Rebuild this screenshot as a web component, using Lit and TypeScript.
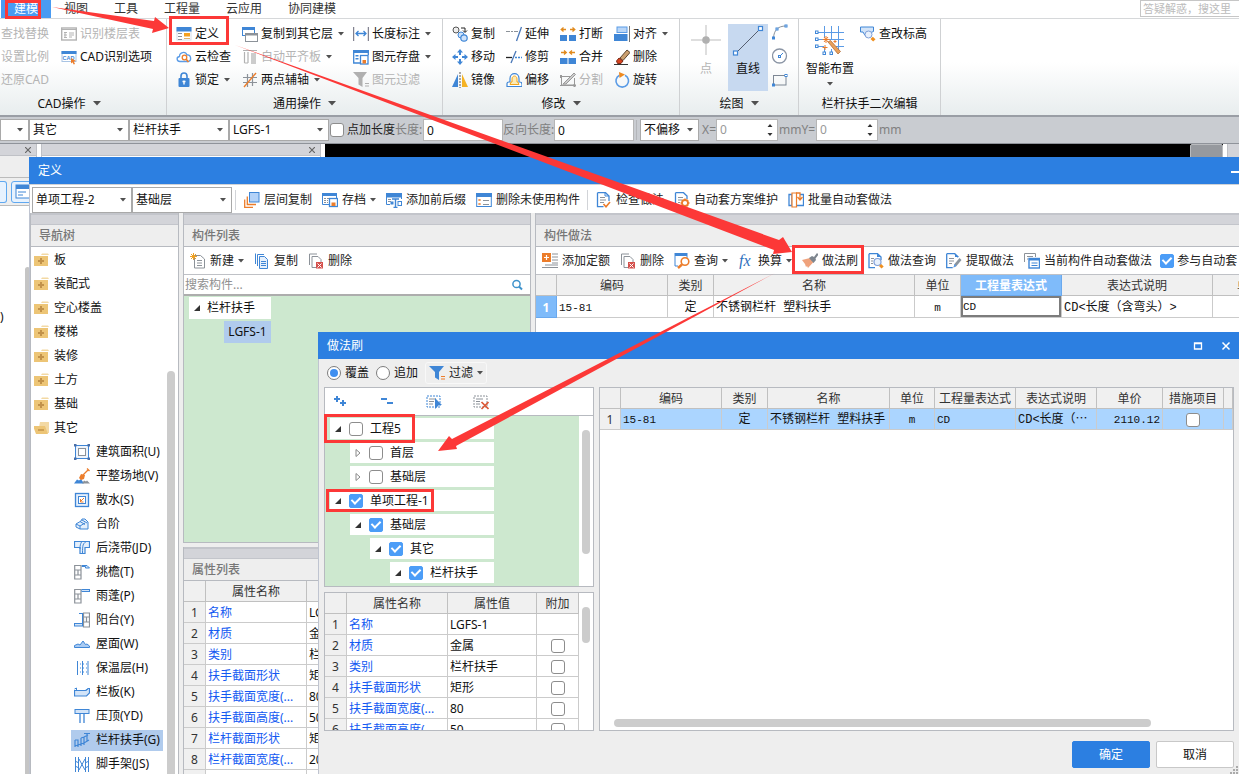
import { LitElement, html, svg, css, nothing } from "lit";
import type { SVGTemplateResult } from "lit";
import { customElement } from "lit/decorators.js";
import { classMap } from "lit/directives/class-map.js";
import { styleMap } from "lit/directives/style-map.js";

const B = "#3f86d6";
const L = "#5a9be6";
const P = "#d3e4f8";
const O = "#ec7d2b";
const G = "#8c9299";
const D = "#b2b2b2";

const folderBase = svg`<path d="M8 1.500h6l1 1.500H7z" fill="#f3d9a4"/><rect x="0" y="4" width="14" height="10" fill="#edc576"/>`;

const icons: Record<string, SVGTemplateResult> = {
  floorTable: svg`<rect x=".700" y="2" width="14.600" height="12" fill="none" stroke=${D} stroke-width="1.400"/><path d="M1 3.500h14M4 6v6M3 6.500h3M3 9h3M3 11.500h3M8 7h5M8 9h5M8 11h3" stroke=${D}/>`,
  cad: svg`<rect x="1" y="2.500" width="14" height="10" fill="#fff" stroke="#a9c4e4"/><path d="M.500 2h15v3H.500z" fill=${B}/><text x="1.500" y="11" font-size="5.500" font-family="Liberation Sans, sans-serif" font-weight="bold" fill=${B}>CAD</text><path d="M10 9l5 3-2.200.600L14 15l-1.300.600-1.200-2.300-1.500 1.200z" fill=${O}/>`,
  define: svg`<rect x="1" y="2" width="14" height="12" fill="#fff" stroke="#d4deea"/><path d="M.500 1h15v4.500H.500z" fill=${B}/><path d="M2 7.500h4M2 10.500h4M2 13.500h4" stroke=${G}/><rect x="8" y="7" width="6" height="3.500" fill="#f5a11f"/><path d="M8 12.500h6" stroke="#e0b26a"/>`,
  cloud: svg`<path d="M4 12.500C.500 12.500 0 8 3.500 7.500 3.500 3 9.500 2 11 6c4-.500 5 5.500 1.500 6.500z" fill="#fff" stroke=${L} stroke-width="1.300"/><circle cx="8.500" cy="8.500" r="2.300" fill="none" stroke=${O} stroke-width="1.300"/><path d="M10 10l2.500 3" stroke=${O} stroke-width="1.600"/>`,
  lock: svg`<path d="M5 7V4a3 3 0 0 1 6 0V7" fill="none" stroke=${B} stroke-width="1.600"/><rect x="2.500" y="6" width="11" height="9" rx="1" fill=${B}/><path d="M8 8.500v4M6.500 9.500h3" stroke="#fff" stroke-width="1.400"/>`,
  floors: svg`<rect x=".500" y="1.500" width="12" height="8" fill="#fff" stroke=${B}/><path d="M0 1h13v3H0z" fill=${B}/><rect x="3.500" y="7.500" width="12" height="8" fill="#fff" stroke=${G}/><path d="M3 7h13v2.500H3z" fill=${G}/>`,
  slab: svg`<path d="M1 1.500h14M2.500 3v11M6 3v11M2.500 14h3.500" stroke=${D} fill="none" stroke-width="1.200"/><path d="M9 4h5v11H9z" fill="#ccc"/>`,
  axis: svg`<path d="M1 5.500h14M1 10.500h14M5.500 2v13M10.500 1v13" stroke=${G} stroke-width="1.200"/><path d="M2 15L14 1" stroke=${O} stroke-width="1.400"/>`,
  dim: svg`<path d="M.700 1v14M15.300 1v14" stroke="#667" /><path d="M3 7.500h10M5.500 5L3 7.500 5.500 10M10.500 5L13 7.500 10.500 10" fill="none" stroke=${B} stroke-width="1.300"/>`,
  save: svg`<path d="M.700 2v12H7M15.300 2v4" fill="none" stroke=${B} stroke-width="1.300"/><path d="M0 1h16v3H0zM2.500 6h3v1.500h-3zM2.500 9h3v1.500h-3z" fill=${B}/><rect x="7.500" y="6.500" width="7.500" height="8.500" fill="#fff" stroke=${B} stroke-width="1.300"/><rect x="9.500" y="11" width="3.500" height="3.500" fill=${O}/>`,
  filterGrey: svg`<path d="M0 0h14L9.500 6v9L5.500 12.500V6z" fill="#b0b0b0"/><path d="M12 11.500h4M12 14h4" stroke="#b0b0b0"/>`,
  filter: svg`<path d="M0 1h15l-5 6v8L6 12.500V7z" fill=${B}/><path d="M12 11.500h4M12 14h4" stroke=${O}/>`,
  copyEl: svg`<circle cx="4" cy="4" r="3" fill="#eee" stroke="#555"/><circle cx="9" cy="9" r="3" fill="#cfe3fb" stroke=${B}/><circle cx="12" cy="12" r="3.200" fill="#cfe3fb" stroke=${B} stroke-width="1.200"/><path d="M9 2h4v4M11 4.500l2 2 2-2" fill="none" stroke="#222"/>`,
  move: svg`<path d="M8 0l3 3.500H9V6H7V3.500H5zM8 16l3-3.500H9V10H7v2.500H5zM0 8l3.500-3v2H6v2H3.500v2zM16 8l-3.500-3v2H10v2h2.500v2z" fill=${B}/>`,
  mirror: svg`<path d="M0 15L6 2v13z" fill=${B}/><path d="M16 15L10 2v13z" fill="#f5b324"/><path d="M8 0v16" stroke="#555" stroke-dasharray="2 1"/>`,
  extend: svg`<path d="M0 5.500h4M5 5.500h2M8 5.500h4" stroke=${G}/><path d="M15.500 1l-5 14" stroke="#4a78b8" stroke-width="1.300"/>`,
  trim: svg`<path d="M0 8.500h6" stroke="#222" stroke-width="1.300"/><path d="M9 8.500h2M12 8.500h2M15 8.500h1" stroke=${B} stroke-width="1.300"/><path d="M10 2L5 14" stroke="#4a78b8" stroke-width="1.300"/>`,
  offset: svg`<path d="M1 14.500v-3q0-1.500 2-1.500h1V6.500C4 0 13 0 13 6.500V10q3 0 3 2v2.500z" fill="#fff" stroke=${B} stroke-width="1.200"/><path d="M4 12.500h9l-1-2.500h-1V7c0-4-5-4-5 0v3H5z" fill="#fdebb5" stroke="#f0a61e"/>`,
  break: svg`<path d="M0 9h7v6H0zM9 9h7v6H9z" fill=${B}/><path d="M1 3.500h5M3.500 1.500L1.200 3.500l2.300 2M10 3.500h5M12.500 1.500l2.300 2-2.300 2" fill="none" stroke="#e08a1e" stroke-width="1.300"/>`,
  merge: svg`<path d="M0 9h7.500v6H0zM8.500 9H16v6H8.500z" fill=${B}/><path d="M1 3.500h5M4 1.500l2.300 2-2.300 2M10 3.500h5M12 1.500l-2.300 2 2.300 2" fill="none" stroke="#e08a1e" stroke-width="1.300"/>`,
  split: svg`<path d="M1 4.500h9M14.500 6v7h-13v-8M0 13.500h16" fill="none" stroke="#999"/><path d="M3 12L14 1l1.500 1.500L6 12z" fill="#ccc" stroke="#999"/><path d="M1 3v3M14.500 12v3" stroke="#999" stroke-width="2"/>`,
  align: svg`<rect x="3" y="1" width="10" height="5.500" fill="#b9d6f8" stroke=${L}/><rect x="0" y="8" width="13.500" height="7" fill=${B}/><path d="M15.500 0v16" stroke="#777"/>`,
  erase: svg`<path d="M0 15.500h14" stroke="#333"/><path d="M6 9l7-8 3 2.500-7 8z" fill="#cba070" stroke="#5b4630"/><path d="M5 9l4 3-2 2.500H3.500L2.500 12z" fill="#d8431f" stroke="#7d2a16"/>`,
  rotate: svg`<path d="M5.500 3.200a6.300 6.300 0 1 0 5.500 0" fill="none" stroke=${L} stroke-width="1.600"/><path d="M5 0l6 2.500L5.500 6z" fill="#ee8a20"/>`,
  point: svg`<path d="M16 1v12M16 19v12M1 16h12M19 16h12" stroke="#bdbdbd"/><circle cx="16" cy="16" r="3.800" fill="#b0b0b0"/>`,
  line: svg`<path d="M4 29L29 4" stroke="#555e70"/><rect x="1.500" y="27" width="4" height="4" fill="#fff" stroke=${B} stroke-width="1.200"/><rect x="26.500" y="2.500" width="4" height="4" fill="#fff" stroke=${B} stroke-width="1.200"/>`,
  arc: svg`<path d="M1.500 14C2 6 6 2 14 2" fill="none" stroke=${G}/><rect x=".500" y="13" width="2" height="2" fill="#fff" stroke=${B}/><rect x="4" y="4" width="2" height="2" fill="#fff" stroke=${B}/><rect x="13" y="1" width="2" height="2" fill="#fff" stroke=${B}/>`,
  circle: svg`<circle cx="7.500" cy="8" r="7" fill="none" stroke="#8b95a5" stroke-width="1.300"/><path d="M8 8l3-3" stroke=${B}/><rect x="6.500" y="7.500" width="2" height="2" fill="#fff" stroke=${B}/>`,
  rect: svg`<rect x="1.500" y="3.500" width="12.500" height="9.500" fill="none" stroke="#7d8794"/><rect x=".500" y="12" width="2" height="2" fill="#fff" stroke=${B}/><rect x="13" y="2.500" width="2" height="2" fill="#fff" stroke=${B}/>`,
  smart: svg`<path d="M2 8.500h28M4 15.500h26M4 22.500h6M22 22.500h8M10.500 2v12M10.500 24v5M17.500 2v14M17.500 25v4M24.500 2v24" stroke=${L} fill="none"/><g fill="#fff" stroke=${B}><rect x="1.500" y="7" width="2.500" height="2.500"/><rect x="1.500" y="14" width="2.500" height="2.500"/><rect x="1.500" y="21" width="2.500" height="2.500"/><rect x="9" y="28" width="2.500" height="2.500"/><rect x="16" y="28" width="2.500" height="2.500"/></g><path d="M14 18l2.500-1.500 10 11-2.500 2.500z" fill="#e9a15c" stroke="#a9622c" stroke-width=".700"/><path d="M12 12v7M8.500 15.500h7M10 13l4 5M14 13l-4 5M11 21v5M8.500 23.500h5M21 16v3M19.500 17.500h3" stroke=${O}/>`,
  elevation: svg`<path d="M.500 1h13v4.500l-2.500 1v3H5l-2-3.500H.500z" fill=${P} stroke=${B}/><circle cx="8.500" cy="8.500" r="3.500" fill="#e9f1fc" stroke="#7f9fd8"/><path d="M10.500 13l2.300-2.300 2.700 2.600-2.300 2.300z" fill="#f09020"/>`,
  between: svg`<rect x="5.500" y=".500" width="9.500" height="9.500" fill="#b3d2f8" stroke=${B}/><path d="M3.300 4.500V12.500H12M.700 7.500V15.300H9" fill="none" stroke=${O} stroke-width="1.300"/>`,
  archive: svg`<path d="M.500 2.500h14v4M.500 2.500v10H7" fill="none" stroke=${B}/><path d="M0 1h15v3H0z" fill=${B}/><path d="M2 6.500h5M2 8.500h4M2 10.500h4" stroke=${G} stroke-dasharray="2 1"/><rect x="7.500" y="6.500" width="8" height="8" fill="#fff" stroke=${B} stroke-width="1.300"/><rect x="9.500" y="10.500" width="4" height="3.500" fill=${O}/>`,
  prefix: svg`<path d="M.500 3.500v9H4M15.500 3v4" fill="none" stroke=${B}/><path d="M0 1h16v4.500H0z" fill=${B}/><path d="M2 7.500h3M2 9.500h3" stroke=${G}/><path d="M6 7h7M9.500 7v8.500M7.500 15.500h4" stroke=${B} stroke-width="1.400" fill="none"/><rect x="4.500" y="9.500" width="3" height="3" fill=${B}/><rect x="12" y="9.500" width="3.500" height="4" fill="#fff" stroke=${B}/>`,
  unused: svg`<rect x=".700" y="2" width="14.600" height="12.500" fill="#fff" stroke=${B}/><path d="M0 1h16v4H0z" fill=${B}/><path d="M2.500 7l2 2M4.500 7l-2 2M2.500 11l2 2M4.500 11l-2 2" stroke=${O}/><path d="M7 8.500h6M7 12.500h6" stroke=${G}/>`,
  check: svg`<path d="M1.500.700h8L13 4v5M1.500.700v14h6" fill="none" stroke=${B} stroke-width="1.300"/><path d="M9 .500V4h4" fill="none" stroke=${B}/><path d="M4 5.500h5M4 8h6M4 10.500h4" stroke=${G}/><path d="M7.500 12l2.500 2.800L14 10" fill="none" stroke=${O} stroke-width="1.600"/>`,
  scheme: svg`<path d="M1.500.700h8L13 4v3M1.500.700v14h5" fill="none" stroke=${B} stroke-width="1.300"/><path d="M4 5.500h5M4 8h4M4 10.500h2" stroke=${G}/><circle cx="11" cy="11" r="3" fill="#fff" stroke=${O} stroke-width="1.800"/><path d="M11 6.500v2M11 13.500v2M6.500 11h2M13.500 11h2M8 8l1 1M13 13l1 1M14 8l-1 1M9 13l-1 1" stroke=${O} stroke-width="1.600"/>`,
  batch: svg`<path d="M1 2.500h3v11H1zM12 2.500h3.500v11H7" fill="#fff" stroke=${B} stroke-width="1.300"/><path d="M4 1h4.500v14H4z" fill="#fff" stroke=${O} stroke-width="1.200"/><path d="M8 1h4v6M9.500 5l2.500 3 2.500-3" fill="none" stroke=${O} stroke-width="1.300"/>`,
  add: svg`<path d="M4.500 2.500h6L14.500 6v9h-10z" fill="#fff" stroke=${G}/><path d="M7 7.500h5M7 10h5M7 12.500h5" stroke=${G}/><path d="M3.500 0v7M0 3.500h7M1 1l5 5M6 1L1 6" stroke="#f0a020"/>`,
  copyDoc: svg`<path d="M5.500 3.500h5l3 3v9h-8z" fill="#e6f0fc" stroke=${B}/><path d="M3.500 13V1.500H10M1.500 11V.500" fill="none" stroke=${B}/><path d="M7 8.500h5M7 10.500h5M7 12.500h5" stroke=${B}/>`,
  delDoc: svg`<path d="M4 3.500h6l3 3V10M4 3.500v11h4" fill="none" stroke=${G}/><path d="M1.500 12V1H9" fill="none" stroke=${G}/><rect x="8" y="9" width="7" height="6.500" fill="#d4504c"/><path d="M9.500 10.500l4 4M13.500 10.500l-4 4" stroke="#fff"/>`,
  quota: svg`<rect x="0" y="0" width="9" height="9" fill=${O}/><path d="M4.500 2v5M2 4.500h5" stroke="#fff" stroke-width="1.200"/><path d="M10 1h6M10 4h6M10 7h6M10 10h6M3 12h13M0 14.500h16" stroke=${G}/>`,
  query: svg`<path d="M.500 0h13v3H.500z" fill=${B}/><path d="M1 3v10h3M13 3v2" stroke=${B} fill="none"/><circle cx="11" cy="8.500" r="3.800" fill="#fff" stroke=${O} stroke-width="1.600"/><path d="M8 11.500l-4 3.500" stroke=${O} stroke-width="2.400"/>`,
  fx: svg`<text x="1" y="13" font-size="16" font-style="italic" font-family="Liberation Serif, serif" fill="#2d6fc0">fx</text>`,
  brush: svg`<path d="M0 7l8-2 3.500 4-5.500 6-1-2-1 1-1-3z" fill="#efa27c"/><path d="M7 5l3-2 2 1 3-4 1.500 1.500-3 4L14 7l-2.500 3z" fill="#7d858e"/>`,
  methodQuery: svg`<path d="M1 .700h8.500L13 4v3M1 .700v14h6" fill="none" stroke=${B} stroke-width="1.300"/><path d="M9 .500V4h4z" fill=${B}/><path d="M3 5.500h3M3 8h2M3 10.500h2" stroke=${G}/><circle cx="9.500" cy="9" r="3.500" fill="#e9f1fc" stroke="#7f9fd8" stroke-width="1.200"/><path d="M11 13l2.200-2 2.500 2.500-2.200 2z" fill="#f09020"/>`,
  extract: svg`<path d="M.700.700h8l3.500 3.500M.700.700v14h6" fill="none" stroke=${B} stroke-width="1.300"/><path d="M9 .500V4h4z" fill=${B}/><path d="M3 5.500h5M3 8h5M3 10.500h3" stroke=${G}/><path d="M7.500 14.500l1-3.500 5-6 2 2-5 6z" fill="#8a949e"/><path d="M7.500 14.500l1-3.500 2 2z" fill=${L}/>`,
  current: svg`<path d="M.500 9V.500h11V4M3 3.500h6M3 6h1" fill="none" stroke=${G}/><rect x="5" y="5.500" width="10.500" height="9.500" fill="#fff" stroke=${B} stroke-width="1.400"/><path d="M5 5h11v2.500H5z" fill=${B}/><path d="M7.500 10h6M7.500 12.500h6" stroke=${B} stroke-width="1.200"/>`,
  search: svg`<circle cx="7.500" cy="7" r="3.600" fill="#fff" stroke="#3f93cc" stroke-width="1.500"/><path d="M10 9.500l3 3" stroke="#3f93cc" stroke-width="2"/>`,
  expandAll: svg`<path d="M5 2v6M2 5h6M11 6v6M8 9h6" stroke=${B} stroke-width="2"/>`,
  collapseAll: svg`<path d="M2 5h6M8 9h6" stroke=${B} stroke-width="2"/>`,
  selectAll: svg`<rect x="1" y="2" width="13" height="11" fill="none" stroke=${B} stroke-dasharray="2 1"/><path d="M3 5h7M3 7.500h5M3 10h4" stroke=${G}/><path d="M9 4l7 7h-3l-4 4z" fill=${B}/>`,
  selectNone: svg`<rect x="1" y="2" width="13" height="11" fill="none" stroke=${G} stroke-dasharray="2 1"/><path d="M3 5h7M3 7.500h4M3 10h4" stroke=${G}/><path d="M8.500 8l7 7M15.500 8l-7 7" stroke="#dc5a38" stroke-width="1.700"/>`,
  folder: svg`${folderBase}<path d="M7 6v6M4 9h6" stroke="#c2924a" stroke-width="2"/>`,
  folderOpen: svg`<path d="M6 2h9v11H4z" fill="#f3d9a4"/><path d="M-1 6h12l3 8H2z" fill="#edc576"/><path d="M4 10h6" stroke="#c2924a" stroke-width="1.500"/>`,
  area: svg`<rect x="1.500" y="1.500" width="13" height="13" fill="#eef4fc" stroke=${B}/><rect x="4.500" y="4.500" width="7" height="7" fill="#fff" stroke=${G}/><path d="M0 0h2.500v2.500H0zM13.500 0H16v2.500h-2.500zM0 13.500h2.500V16H0zM13.500 13.500H16V16h-2.500z" fill="#4a6fa8"/>`,
  ground: svg`<path d="M0 15.500l3-4 2 1 2-1.500 3 4.500z" fill=${B}/><path d="M8 15.500l2-3 2 1 1-1 3 3z" fill=${G}/><path d="M5 10l2-4 4 1-1 4-3 1z" fill=${O}/><path d="M9 7l5-5M13 .500l2.500 2.500" stroke=${O} stroke-width="1.300"/>`,
  apron: svg`<rect x="1.500" y="1.500" width="13" height="13" fill="#e4effc" stroke=${B} stroke-width="1.300"/><rect x="4.500" y="4.500" width="7" height="7" fill="#fff" stroke=${B}/><path d="M10 6L7 9M6.500 7v3h3" fill="none" stroke=${O}/>`,
  steps: svg`<path d="M2 8l5-3 1-2h3l3 3v7H6l-4-2zM2 8l4 2v3M6 10l5-3M6 5.500l5 3M8 4l5 3" fill="#e4effc" stroke=${B}/>`,
  strip: svg`<path d="M.500 1.500h15v6H11V13.500H6V7.500H.500z" fill="#e4effc" stroke=${B} stroke-width="1.200"/><path d="M7.500 2C6.500 4 6 5 6 9M12 1.500c-3 2.500-3.500 3-3.500 12" fill="none" stroke=${B}/>`,
  cornice: svg`<path d="M.700 1.500h6.300v13.500H.700zM.700 6h6.300M4 6v5M.700 11h6.300" fill="none" stroke=${G} stroke-width="1.200"/><path d="M8 1.500h5l2.500 2.500h-4V2.500H8z" fill=${P} stroke=${B}/>`,
  canopy: svg`<path d="M.700 1.500h6.300v13.500H.700zM.700 6h6.300M4 6v5M.700 11h6.300" fill="none" stroke=${G} stroke-width="1.200"/><rect x="8" y="1.500" width="7.500" height="2" fill=${P} stroke=${B}/>`,
  balcony: svg`<path d="M9.500 1v14h6V1zM9.500 5h6M12.500 5v5M9.500 10h6" fill="none" stroke=${G} stroke-width="1.200"/><path d="M5 1.500h4M8.500 2v9" stroke=${B}/><rect x=".500" y="11.500" width="8" height="2.500" fill=${P} stroke=${B}/>`,
  roof: svg`<path d="M.500 11.500v-2L4 8l2 1 3-4 2.500 3.500L13 8l2.500 2v1.500z" fill="#a9cbf3" stroke=${B}/>`,
  insulation: svg`<path d="M3.500 1v14M8.500 1v14M14 1v14" stroke=${B}/><path d="M3 4h11M3 8h11M3 12h11" stroke=${B} stroke-dasharray="1 2"/>`,
  railPanel: svg`<path d="M.500 6.500h11l3-2h1V9l-3 3h-12z" fill=${P} stroke=${B} stroke-width="1.200"/><path d="M.500 5l2-1v2M11.500 7l3-3" stroke=${B} fill="none"/>`,
  coping: svg`<rect x="1" y="1.500" width="14" height="4" fill=${P} stroke=${B}/><path d="M6 6v9M10 6v9" stroke=${B} stroke-width="1.300"/>`,
  railing: svg`<path d="M1 8v7M1 8h3v7M7 6v8M7 6l3-1v8M10 5l4-2M13 1v8M10 1.500h6M1 14l6-2 3-1 5-3" fill="none" stroke=${B} stroke-width="1.200"/>`,
  scaffold: svg`<path d="M1.500 1v15M4.500 1v15M11.500 1v15M14.500 1v15M5 3l6 11M11 3L5 14M1 5l4 2M1 10l4 2M11 7l4-2M11 12l4-2" stroke=${B} fill="none"/>`,
  panelBtn: svg`<rect x="1" y="1" width="14" height="13" fill="#fff" stroke=${B}/><path d="M1 1h15v4H1z" fill=${B}/><path d="M3 8h8M3 11h5" stroke=${B}/>`,
};

const icon = (name: string, size = 16) =>
  html`<svg class="ic" width=${size} height=${size} viewBox=${size > 16 ? "0 0 32 32" : "0 0 16 16"} aria-hidden="true">${icons[name]}</svg>`;

const caret = html`<svg class="caret" width="6" height="4" viewBox="0 0 6 4" aria-hidden="true"><path d="M0 0h6L3 3.500z" fill="#505050" /></svg>`;
const bigCaret = html`<svg width="8" height="5" viewBox="0 0 8 5" aria-hidden="true"><path d="M0 0h8L4 4.500z" fill="#505050" /></svg>`;

type Cmd = [icon: string, label: string, menu?: boolean, disabled?: boolean];

const cmd = ([name, label, menu, disabled]: Cmd) => html`
  <button class="cmd" ?disabled=${disabled}>${name ? icon(name) : nothing}<span>${label}</span>${menu ? caret : nothing}</button>`;

const combo = (label: string, options: string[], cls: string) => html`
  <span class="combo ${cls}">
    <select aria-label=${label}>${options.map((o) => html`<option>${o}</option>`)}</select>${caret}
  </span>`;

const group2: Cmd[][] = [
  [["define", "定义"], ["cloud", "云检查"], ["lock", "锁定", true]],
  [["floors", "复制到其它层", true], ["slab", "自动平齐板", true, true], ["axis", "两点辅轴", true]],
  [["dim", "长度标注", true], ["save", "图元存盘", true], ["filterGrey", "图元过滤", false, true]],
];
const group3: Cmd[][] = [
  [["copyEl", "复制"], ["move", "移动"], ["mirror", "镜像"]],
  [["extend", "延伸"], ["trim", "修剪"], ["offset", "偏移"]],
  [["break", "打断"], ["merge", "合并"], ["split", "分割", false, true]],
  [["align", "对齐", true], ["erase", "删除"], ["rotate", "旋转"]],
];
const navFolders = ["板", "装配式", "空心楼盖", "楼梯", "装修", "土方", "基础"];
const navItems: [string, string][] = [
  ["area", "建筑面积(U)"], ["ground", "平整场地(V)"], ["apron", "散水(S)"], ["steps", "台阶"],
  ["strip", "后浇带(JD)"], ["cornice", "挑檐(T)"], ["canopy", "雨蓬(P)"], ["balcony", "阳台(Y)"],
  ["roof", "屋面(W)"], ["insulation", "保温层(H)"], ["railPanel", "栏板(K)"], ["coping", "压顶(YD)"],
  ["railing", "栏杆扶手(G)"], ["scaffold", "脚手架(JS)"],
];
const props: [string, string][] = [
  ["名称", "LGFS-1"], ["材质", "金属"], ["类别", "栏杆扶手"], ["扶手截面形状", "矩形"],
  ["扶手截面宽度(...", "80"], ["扶手截面高度(...", "50"], ["栏杆截面形状", "矩形"], ["栏杆截面宽度(...", "20"],
];
const tree: { level: number; label: string; open: boolean; checked: boolean }[] = [
  { level: 0, label: "工程5", open: true, checked: false },
  { level: 1, label: "首层", open: false, checked: false },
  { level: 1, label: "基础层", open: false, checked: false },
  { level: 0, label: "单项工程-1", open: true, checked: true },
  { level: 1, label: "基础层", open: true, checked: true },
  { level: 2, label: "其它", open: true, checked: true },
  { level: 3, label: "栏杆扶手", open: true, checked: true },
];

const cols = (widths: number[]) =>
  html`<colgroup>${widths.map((w) => html`<col style=${styleMap({ width: w ? `${w}px` : "auto" })} />`)}</colgroup>`;

const twisty = (open: boolean) => html`
  <button class="twisty" aria-label=${open ? "折叠" : "展开"}>
    <svg width="8" height="8" viewBox="0 0 8 8">${open
      ? svg`<path d="M7 1v6H1z" fill="#333"/>`
      : svg`<path d="M2 0.500v7L6 4z" fill="#fff" stroke="#888"/>`}</svg>
  </button>`;

@customElement("app-root")
export class AppRoot extends LitElement {
  static styles = css`
    :host {
      display: block; position: relative; height: 100vh; min-height: 600px; overflow: hidden;
      font: 12px/16px "Noto Sans", "Noto Sans CJK SC", sans-serif; color: #111; background: #fff;
    }
    * { box-sizing: border-box; }
    button, input, select { font: inherit; color: inherit; margin: 0; padding: 0; border: 0; background: none; border-radius: 0; outline: none; }
    button { display: inline-flex; align-items: center; white-space: nowrap; }
    svg { display: block; flex: none; }
    input::placeholder { color: #909090; opacity: 1; }

    .desktop { display: flex; flex-direction: column; height: 100%; }
    .tabs { display: flex; height: 19px; border-bottom: 1px solid #d6d8da; padding-left: 1px; color: #333; }
    .tabs button { padding: 0 13px; justify-content: center; }
    .tabs .active { background: #4a9bf2; color: #fff; }
    .tabs .ask { margin-left: auto; width: 99px; height: 17px; border: 1px solid #c6c6c6; border-right: 0; padding: 0 2px; font-size: 11px; }
    .ask::placeholder { color: #bbb; }

    .ribbon { display: flex; height: 98px; border-bottom: 2px solid #9a9ea5; background: linear-gradient(#fff 45%, #e8edee); }
    .group { display: flex; flex-direction: column; border-right: 1px solid #cfd1d3; padding-top: 3px; }
    .g1 { width: 167px; } .g2 { width: 276px; } .g3 { width: 237px; } .g4 { width: 119px; } .g5 { width: 142px; }
    .title { display: flex; align-items: center; justify-content: center; gap: 7px; height: 25px; padding-top: 1px; }
    .body { display: flex; height: 69px; }
    .g1 .body { padding-left: 1px; gap: 12px; }
    .g2 .body, .g3 .body { padding-left: 9px; }
    .g4 .body { padding: 2px 0 0 8px; gap: 4px; }
    .g5 .body { padding: 0 0 0 7px; gap: 6px; }
    .g1 .title { padding-right: 28px; }
    .col { display: flex; flex-direction: column; align-items: flex-start; }
    .g2 .c0 { width: 66px; } .g2 .c1 { width: 111px; } .g3 .col { width: 54px; }
    .cmd { gap: 3px; height: 23px; }
    .cmd .caret { margin-left: 2px; }
    button:disabled { color: #b4b4b4; }
    .big { flex-direction: column; height: 67px; width: 40px; gap: 5px; }
    .big.point { width: 36px; }
    .big.on { background: #c7d9f0; }
    .big.wide { width: 48px; margin-top: 2px; }
    .shapes { display: flex; flex-direction: column; justify-content: space-between; height: 64px; }

    .options { display: flex; align-items: center; height: 27px; flex: none; background: #c9ccd1; border-bottom: 1px solid #8f939a; color: #808080; white-space: nowrap; }
    .options > * { flex: none; }
    .combo { display: inline-grid; grid-template-columns: 1fr; align-items: center; background: #fff; border: 1px solid #a9a9a9; height: 22px; color: #111; }
    .combo select { grid-area: 1 / 1; appearance: none; width: 100%; height: 100%; padding-left: 3px; }
    .combo .caret { grid-area: 1 / 1; justify-self: end; margin-right: 5px; pointer-events: none; }
    .w29 { width: 29px; } .w58 { width: 59px; margin-left: 1px; } .w100 { width: 100px; }
    .tall { height: 26px; }
    .options input[type="text"] { width: 80px; height: 22px; background: #fff; border: 1px solid #b5b5b5; padding: 0 3px; color: #111; }
    .options .first { width: 28px; } .options .second { width: 51px; }
    .options .dark { color: #222; padding-left: 3px; }
    .options .x { width: 17px; text-align: right; } .options .y { width: 38px; text-align: center; }
    .options .unit { padding-left: 1px; }
    .divider { width: 1px; height: 20px; background: #b4b6ba; margin: 0 2px; }
    .spin { display: inline-flex; align-items: center; justify-content: space-between; width: 62px; height: 22px; background: #fff; border: 1px solid #b5b5b5; padding: 0 4px 0 3px; }
    .spin input { width: 40px; appearance: textfield; color: #999; }
    .spin input::-webkit-inner-spin-button { display: none; }

    input[type="checkbox"] { appearance: none; display: inline-grid; place-content: center; width: 14px; height: 14px; flex: none; border: 1px solid #8d8d8d; border-radius: 3px; background: #fff; }
    input[type="checkbox"]:checked { border-color: #4c9df7; border-radius: 2px; background: #4c9df7; }
    input[type="checkbox"]:checked::before { content: ""; width: 4px; height: 7px; border: solid #fff; border-width: 0 2px 2px 0; transform: translateY(-1px) rotate(45deg); }
    .options input[type="checkbox"] { margin-left: 1px; }
    input[type="radio"] { appearance: none; display: inline-grid; place-content: center; width: 14px; height: 14px; border: 1px solid #7d7d7d; border-radius: 50%; background: #fff; }
    input[type="radio"]:checked::before { content: ""; width: 8px; height: 8px; border-radius: 50%; background: #3f8ff0; }

    .work { display: flex; flex: 1; min-height: 0; background: #fff; gap: 4px; }
    .dock { display: flex; flex-direction: column; width: 37px; border-right: 1px solid #bfc1c6; }
    .dock.mid { width: 280px; border-left: 1px solid #bfc1c6; }
    .dock header { display: flex; justify-content: flex-end; align-items: center; height: 12px; background: #d3d4d9; border-bottom: 1px solid #bfc1c6; padding-right: 5px; flex: none; }
    .dock .blank { height: 22px; background: #eee; border-bottom: 1px solid #bbb; }
    .dock .tools { display: flex; gap: 4px; height: 28px; align-items: center; background: #eee; border-bottom: 1px solid #bbb; flex: none; }
    .dock .tools button { height: 22px; width: 7px; border: 1px solid #5fa8f0; border-left: 0; border-radius: 0 3px 3px 0; background: #e7f2fe; overflow: hidden; flex: none; }
    .dock .tools button.full { width: 24px; padding-left: 3px; border-left: 1px solid #5fa8f0; border-radius: 3px; }
    .dock .list { display: flex; justify-content: space-between; flex: 1; padding: 61px 6px 0 0; }
    .dock .list p { margin: 42px 0 0; }
    .dock .list i { width: 5px; background: #c5c5c5; border-radius: 3px 3px 0 0; }
    .canvas { flex: 1; display: flex; justify-content: flex-end; background: #000; }
    .canvas button { width: 33px; height: 30px; background: #96999e; border: 1px solid #b9bbbe; border-radius: 2px; }
    .edge { width: 12px; background: #d3d4d9; border-left: 1px solid #bfc1c6; }

    .window { position: absolute; display: flex; flex-direction: column; right: 0; bottom: 0; background: #eee; border-left: 1px solid #bfc4d0; }
    .define { left: 29px; top: 157px; }
    .dialog { left: 318px; top: 332px; }
    .bar { display: flex; align-items: center; height: 27px; flex: none; margin-left: -1px; padding-left: 9px; background: #2c7fe1; color: #fff; }
    .bar span { flex: 1; }
    .bar button + button { margin-left: 18px; }
    .dialog .bar { padding-right: 8px; }
    .tools1, .tools2 { display: flex; align-items: center; gap: 2px; background: #fff; flex: none; }
    .tools1 { height: 29px; padding: 1px 2px 0; border-top: 1px solid #cfd2d6; }
    .tools1 .combo + .combo { margin-left: -2px; }
    .tools2 { height: 28px; padding: 0 2px; border-bottom: 1px solid #bfc1c6; color: #222; }
    .tb { gap: 4px; height: 22px; padding: 0 4px; border-radius: 3px; color: #222; }
    .tools1 .divider { background: #d2d4d8; margin: 0 2px 0 1px; }
    .join { display: inline-flex; align-items: center; gap: 3px; margin-left: 2px; white-space: nowrap; }

    .panels { display: flex; flex: 1; min-height: 0; gap: 4px; }
    .panel { display: flex; flex-direction: column; min-height: 0; overflow: hidden; border: solid #b7bac0; border-width: 0 1px; }
    .panel > header { flex: none; height: 34px; border-top: 2px solid #c3c5cb; border-bottom: 1px solid #b7bac0; background: #eee; }
    .panel > header::before { content: ""; display: block; height: 9px; background: #d3d4d9; border-bottom: 1px solid #c3c5cb; }
    .panel h2 { margin: 0; font: inherit; font-weight: 500; line-height: 22px; padding-left: 8px; color: #777; }
    .nav { width: 149px; }
    .center { display: flex; flex-direction: column; width: 348px; gap: 4px; }
    .upper { flex: 1; border-bottom: 1px solid #b7bac0; }
    .lower { height: 227px; }
    .methods { flex: 1; min-width: 0; background: #fff; border-right: 0; }
    .scroll { display: flex; flex: 1; min-height: 0; overflow: hidden; background: #fff; }
    .scroll > .rows { flex: 1; min-width: 0; overflow: hidden; }
    .thumb { width: 8px; margin: 0 3px; background: #ccc; border-radius: 4px; flex: none; }
    .nav .thumb { margin-top: 124px; border-radius: 4px 4px 0 0; }
    .nav ul { list-style: none; margin: 0; padding: 1px 0 0; }
    .nav li { height: 24px; display: flex; align-items: center; }
    .nav li button { gap: 4px; padding-left: 3px; height: 21px; }
    .nav li.child { padding-left: 40px; }
    .nav li.child button { gap: 6px; padding: 0 3px; }
    .nav .selected button { background: #b0cbed; }
    .find { display: flex; align-items: center; height: 21px; flex: none; border: solid #adadad; border-width: 0 0 2px; background: #fff; padding: 0 5px 0 1px; }
    .find input { flex: 1; }
    .green { flex: 1; background: #cde8cf; }
    .parts { padding: 1px 5px; }
    .parts .root { display: flex; align-items: center; width: 82px; height: 22px; background: #fff; }
    .parts .leaf { display: block; width: 47px; height: 22px; margin: 2px 0 0 35px; background: #b0cbed; text-align: center; }
    .twisty { width: 18px; height: 20px; padding-left: 4px; }

    table { border-collapse: separate; border-spacing: 0; table-layout: fixed; background: #fff; width: 100%; }
    th, td { height: 21px; padding: 2px 2px 0; border: solid #cbcbcb; border-width: 0 1px 1px 0; font-weight: 400; white-space: nowrap; overflow: hidden; line-height: 16px; }
    thead th { background: #f0f0f0; color: #333; border-color: #c0c0c0; text-align: center; }
    tbody th { background: #f0f0f0; color: #333; text-align: center; }
    .name { color: #1259f2; }
    .mid-cell { text-align: center; }
    td input[type="checkbox"] { display: grid; margin: 0 auto; }
    .song { font-family: "Liberation Mono", "Noto Sans CJK SC", monospace; }
    .code { font-family: "Liberation Mono", monospace; font-size: 11px; }
    .wide-table { width: 822px; }
    th.sel { background: #7fbbfa; color: #fff; font-weight: 700; border-color: #6aa9ee; }
    td.edit { padding: 0; }
    td.edit input { display: block; width: 100%; height: 21px; border: 2px solid #7c7c7c; }

    .modes { display: flex; align-items: center; height: 28px; flex: none; padding: 0 8px; color: #111; }
    .modes label { display: inline-flex; align-items: center; gap: 4px; margin-right: 7px; }
    .modes .tb { border: 1px solid #f8f8f8; padding: 0 3px; }
    .split { display: flex; flex: 1; min-height: 0; gap: 5px; padding: 0 5px; }
    .side { display: flex; flex-direction: column; gap: 5px; width: 270px; flex: none; }
    .box { display: flex; flex-direction: column; border: 1px solid #b7bac0; background: #fff; min-height: 0; overflow: hidden; }
    .side .top { height: 200px; flex: none; }
    .side .bottom { flex: 1; }
    .picker { display: flex; gap: 31px; height: 28px; flex: none; padding-left: 7px; border-bottom: 1px solid #b7bac0; }
    .node { display: flex; align-items: center; height: 21px; margin-bottom: 3px; background: #fff; }
    .nodes { width: 169px; padding-top: 2px; }
    .node label { padding-left: 7px; }
    .node .twisty { width: 19px; }
    .top .thumb { height: 124px; margin-top: 14px; }
    .bottom .thumb { height: 36px; margin-top: 14px; }
    .grid { flex: 1; min-width: 0; justify-content: space-between; }
    .grid tbody td { background: #abd5ff; }
    .num { text-align: right; }
    .hthumb { height: 8px; margin: 0 82px 3px 14px; background: #ccc; border-radius: 4px; }
    footer { display: flex; justify-content: flex-end; gap: 6px; flex: none; height: 43px; padding: 10px 5px 6px; }
    footer button { width: 78px; justify-content: center; border-radius: 2px; border: 1px solid #c8c8c8; background: #fff; }
    footer .ok { background: #2c7fe1; border-color: #2c7fe1; color: #fff; }
    .grip { position: absolute; right: 0; bottom: 0; }
    .marks { position: absolute; left: 0; top: 0; pointer-events: none; }
  `;

  private ribbon() {
    const title = (t: string, menu = true) => html`<div class="title">${t}${menu ? bigCaret : nothing}</div>`;
    const column = (c: Cmd[], i: number) => html`<div class="col c${i}">${c.map(cmd)}</div>`;
    return html`
      <nav class="tabs">
        ${["建模", "视图", "工具", "工程量", "云应用", "协同建模"].map(
          (t, i) => html`<button class=${classMap({ active: i === 0 })}>${t}</button>`)}
        <input class="ask" type="text" aria-label="搜索" placeholder="答疑解惑，搜这里" />
      </nav>
      <section class="ribbon">
        <div class="group g1">
          <div class="body">
            <div class="col">${([["", "查找替换", false, true], ["", "设置比例", false, true], ["", "还原CAD", false, true]] as Cmd[]).map(cmd)}</div>
            <div class="col">${([["floorTable", "识别楼层表", false, true], ["cad", "CAD识别选项"]] as Cmd[]).map(cmd)}</div>
          </div>
          ${title("CAD操作")}
        </div>
        <div class="group g2"><div class="body">${group2.map(column)}</div>${title("通用操作")}</div>
        <div class="group g3"><div class="body">${group3.map(column)}</div>${title("修改")}</div>
        <div class="group g4">
          <div class="body">
            <button class="big point" disabled>${icon("point", 32)}点</button>
            <button class="big on">${icon("line", 32)}直线</button>
            <div class="shapes">
              ${[["arc", "弧线"], ["circle", "圆"], ["rect", "矩形"]].map(([n, l]) => html`<button aria-label=${l}>${icon(n)}</button>`)}
            </div>
          </div>
          ${title("绘图")}
        </div>
        <div class="group g5">
          <div class="body">
            <button class="big wide">${icon("smart", 32)}<span>智能布置</span>${caret}</button>
            <div class="col">${cmd(["elevation", "查改标高"])}</div>
          </div>
          ${title("栏杆扶手二次编辑", false)}
        </div>
      </section>`;
  }

  private options() {
    const spin = (id: string) => html`
      <span class="spin"><input id=${id} type="number" value="0" />
        <svg width="6" height="14" viewBox="0 0 6 14"><path d="M0.500 4h5L3 1zM0.500 10h5L3 13z" fill="#333" /></svg>
      </span>`;
    return html`
      <section class="options">
        ${combo("楼层", [""], "w29")}${combo("构件类型", ["其它"], "w100")}
        ${combo("构件", ["栏杆扶手"], "w100")}${combo("构件名称", ["LGFS-1"], "w100")}
        <input id="addlen" type="checkbox" /><label class="dark" for="addlen">点加长度</label>
        <label class="first" for="len">长度:</label><input id="len" type="text" value="0" />
        <label class="second" for="rlen">反向长度:</label><input id="rlen" type="text" value="0" />
        <span class="divider"></span>
        ${combo("偏移方式", ["不偏移"], "w58")}
        <label class="x" for="ox">X=</label>${spin("ox")}
        <label class="y" for="oy">mmY=</label>${spin("oy")}<span class="unit">mm</span>
      </section>`;
  }

  private workspace() {
    const close = html`<button aria-label="关闭"><svg width="6" height="6" viewBox="0 0 6 6"><path d="M0 0l6 6M6 0L0 6" stroke="#666" stroke-width="1.200" /></svg></button>`;
    return html`
      <section class="work">
        <div class="dock">
          <header>${close}</header>
          <div class="blank"></div>
          <div class="tools"><button aria-label="列表"></button><button class="full" aria-label="面板">${icon("panelBtn")}</button></div>
          <div class="list"><p>)</p><i></i></div>
        </div>
        <div class="dock mid"><header>${close}</header></div>
        <div class="canvas"><button aria-label="视图"></button></div>
        <div class="edge"></div>
      </section>`;
  }

  private tb([name, label, menu]: Cmd) {
    return html`<button class="tb">${icon(name)}<span>${label}</span>${menu ? caret : nothing}</button>`;
  }

  private define() {
    return html`
      <section class="window define">
        <header class="bar"><span>定义</span>
          <button aria-label="最小化"><svg width="8" height="8" viewBox="0 0 8 8"><path d="M0 5h8" stroke="#fff" stroke-width="2" /></svg></button>
        </header>
        <div class="tools1">
          ${combo("工程", ["单项工程-2"], "w100 tall")}${combo("楼层", ["基础层"], "w100 tall")}
          <span class="divider"></span>
          ${([["between", "层间复制"], ["archive", "存档", true], ["prefix", "添加前后缀"], ["unused", "删除未使用构件"]] as Cmd[]).map(this.tb)}
          <span class="divider"></span>
          ${([["check", "检查做法"], ["scheme", "自动套方案维护"], ["batch", "批量自动套做法"]] as Cmd[]).map(this.tb)}
        </div>
        <div class="panels">
          <div class="panel nav">
            <header><h2>导航树</h2></header>
            <div class="scroll">
              <ul class="rows">
                ${navFolders.map((f) => html`<li><button>${icon("folder")}${f}</button></li>`)}
                <li><button>${icon("folderOpen")}其它</button></li>
                ${navItems.map(([n, l]) => html`<li class=${classMap({ child: true, selected: n === "railing" })}><button>${icon(n)}${l}</button></li>`)}
              </ul>
              <div class="thumb"></div>
            </div>
          </div>
          <div class="center">
            <div class="panel upper">
              <header><h2>构件列表</h2></header>
              <div class="tools2">${([["add", "新建", true], ["copyDoc", "复制"], ["delDoc", "删除"]] as Cmd[]).map(this.tb)}</div>
              <div class="find"><input type="text" aria-label="搜索构件" placeholder="搜索构件..." />${icon("search")}</div>
              <div class="green parts">
                <div class="root">${twisty(true)}<span>栏杆扶手</span></div>
                <button class="leaf">LGFS-1</button>
              </div>
            </div>
            <div class="panel lower">
              <header><h2>属性列表</h2></header>
              <table>
                ${cols([22, 101, 0])}
                <thead><tr><th></th><th>属性名称</th><th>属性值</th></tr></thead>
                <tbody>
                  ${props.map(([k, v], i) => html`<tr><th>${i + 1}</th><td class="name">${k}</td><td>${v}</td></tr>`)}
                  <tr><th></th><td></td><td></td></tr>
                </tbody>
              </table>
            </div>
          </div>
          <div class="panel methods">
            <header><h2>构件做法</h2></header>
            <div class="tools2">
              ${([["quota", "添加定额"], ["delDoc", "删除"], ["query", "查询", true], ["fx", "换算", true], ["brush", "做法刷"],
                ["methodQuery", "做法查询"], ["extract", "提取做法"], ["current", "当前构件自动套做法"]] as Cmd[]).map(this.tb)}
              <label class="join"><input type="checkbox" checked />参与自动套</label>
            </div>
            <table class="wide-table">
              ${cols([21, 111, 46, 201, 46, 101, 151, 73, 72])}
              <thead><tr><th></th><th>编码</th><th>类别</th><th>名称</th><th>单位</th><th class="sel">工程量表达式</th><th>表达式说明</th><th>单价</th><th></th></tr></thead>
              <tbody><tr>
                <th class="sel">1</th><td class="code">15-81</td><td class="mid-cell song">定</td><td class="song">不锈钢栏杆 塑料扶手</td>
                <td class="mid-cell code">m</td><td class="edit code"><input type="text" aria-label="工程量表达式" value="CD" /></td>
                <td class="song">CD&lt;长度（含弯头）&gt;</td><td></td><td></td>
              </tr></tbody>
            </table>
          </div>
        </div>
      </section>`;
  }

  private dialog() {
    return html`
      <section class="window dialog" role="dialog" aria-label="做法刷">
        <header class="bar"><span>做法刷</span>
          <button aria-label="最大化"><svg width="10" height="10" viewBox="0 0 10 10"><path d="M1.500 2h7v6h-7zM1 2.500h8" fill="none" stroke="#fff" stroke-width="1.300" /></svg></button>
          <button aria-label="关闭"><svg width="10" height="10" viewBox="0 0 10 10"><path d="M1.500 1.500l7 7M8.500 1.500l-7 7" stroke="#fff" stroke-width="1.500" /></svg></button>
        </header>
        <div class="modes">
          <label><input type="radio" name="mode" checked />覆盖</label>
          <label><input type="radio" name="mode" />追加</label>
          ${this.tb(["filter", "过滤", true])}
        </div>
        <div class="split">
          <div class="side">
            <div class="box top">
              <div class="picker">
                ${[["expandAll", "全部展开"], ["collapseAll", "全部折叠"], ["selectAll", "全选"], ["selectNone", "全消"]].map(
                  ([n, l]) => html`<button aria-label=${l}>${icon(n)}</button>`)}
              </div>
              <div class="scroll">
                <div class="rows green"><div class="nodes">
                  ${tree.map((n, i) => html`
                    <div class="node" style=${styleMap({ marginLeft: `${5 + n.level * 20}px` })}>
                      ${twisty(n.open)}<input id="node${i}" type="checkbox" ?checked=${n.checked} /><label for="node${i}">${n.label}</label>
                    </div>`)}
                </div></div>
                <div class="thumb"></div>
              </div>
            </div>
            <div class="box bottom"><div class="scroll">
              <div class="rows">
                <table>
                  ${cols([22, 101, 89, 42])}
                  <thead><tr><th></th><th>属性名称</th><th>属性值</th><th>附加</th></tr></thead>
                  <tbody>${props.slice(0, 6).map(([k, v], i) => html`
                    <tr><th>${i + 1}</th><td class="name">${k}</td><td>${v}</td>
                      <td class="mid-cell">${i ? html`<input type="checkbox" aria-label="附加${k}" />` : nothing}</td></tr>`)}
                  </tbody>
                </table>
              </div>
              <div class="thumb"></div>
            </div></div>
          </div>
          <div class="box grid">
            <table>
              ${cols([21, 101, 46, 122, 45, 81, 81, 66, 61, 0])}
              <thead><tr><th></th><th>编码</th><th>类别</th><th>名称</th><th>单位</th><th>工程量表达式</th><th>表达式说明</th><th>单价</th><th>措施项目</th><th></th></tr></thead>
              <tbody><tr>
                <th>1</th><td class="code">15-81</td><td class="mid-cell song">定</td><td class="song">不锈钢栏杆 塑料扶手</td>
                <td class="mid-cell code">m</td><td class="code">CD</td><td class="song">CD&lt;长度（⋯</td>
                <td class="num code">2110.12</td><td class="mid-cell"><input type="checkbox" aria-label="措施项目" /></td><td></td>
              </tr></tbody>
            </table>
            <div class="hthumb"></div>
          </div>
        </div>
        <footer><button class="ok">确定</button><button>取消</button></footer>
        <svg class="grip" width="10" height="8" viewBox="0 0 10 8"><path d="M7 0h2v2H7zM4 3h2v2H4zM7 3h2v2H7zM1 6h2v2H1zM4 6h2v2H4zM7 6h2v2H7z" fill="#aaa" /></svg>
      </section>`;
  }

  render() {
    return html`
      <main class="desktop">${this.ribbon()}${this.options()}${this.workspace()}</main>
      ${this.define()}${this.dialog()}
      <svg class="marks" width="1239" height="774" viewBox="0 0 1239 774" aria-hidden="true">
        <g fill="none" stroke="#fc3837" stroke-width="3">
          <rect x="6.500" y="1.500" width="33" height="16" />
          <rect x="170.500" y="17.500" width="57" height="26" />
          <rect x="793.500" y="246.500" width="69" height="26" />
          <rect x="325.500" y="415.500" width="88" height="26" />
          <rect x="327.500" y="490.500" width="105" height="20" />
        </g>
        <g fill="#fc3837">
          <path d="M52 7L154 21l1-4 14 11-17 5 1-4z" />
          <path d="M235 45L779 240l4-3 9 15-19 2 1-4z" />
          <path d="M775 273L452 439l-3-3-11 15 19-2-1-3z" />
        </g>
      </svg>`;
  }
}
